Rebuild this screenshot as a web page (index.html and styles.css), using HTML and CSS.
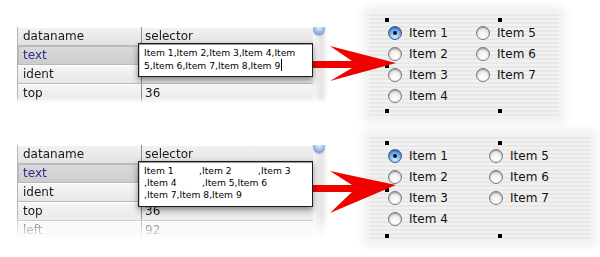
FILE: index.html
```html
<!doctype html>
<html>
<head>
<meta charset="utf-8">
<link rel="stylesheet" href="styles.css">
</head>
<body>
<div class="page">

<section class="demo demo-comma">
	<div class="sheet">
		<div class="grid">
			<div class="row head"><span class="key">dataname</span><span class="val">selector</span></div>
			<div class="row picked"><span class="key">text</span><span class="val"></span></div>
			<div class="row"><span class="key">ident</span><span class="val"></span></div>
			<div class="row"><span class="key">top</span><span class="val">36</span></div>
		</div>
		<div class="strip"><span class="knob"></span></div>
	</div>

	<div class="radios">
		<div class="selection">
			<i class="handle tl"></i><i class="handle tr"></i><i class="handle ml"></i><i class="handle bl"></i><i class="handle br"></i>
			<div class="items">
				<label class="item"><span class="dot on"></span>Item 1</label>
				<label class="item"><span class="dot"></span>Item 2</label>
				<label class="item"><span class="dot"></span>Item 3</label>
				<label class="item"><span class="dot"></span>Item 4</label>
				<label class="item"><span class="dot"></span>Item 5</label>
				<label class="item"><span class="dot"></span>Item 6</label>
				<label class="item"><span class="dot"></span>Item 7</label>
			</div>
		</div>
	</div>

	<svg class="arrow" width="100" height="45" viewBox="0 0 100 45">
		<polygon points="3,21 52,21 30,6 96,23 30,41 52,28 3,28" fill="#f20000"/>
	</svg>

	<div class="editor">Item 1,Item 2,Item 3,Item 4,Item<br>5,Item 6,Item 7,Item 8,Item 9<span class="caret"></span></div>
</section>

<section class="demo demo-tabs">
	<div class="sheet">
		<div class="grid">
			<div class="row head"><span class="key">dataname</span><span class="val">selector</span></div>
			<div class="row picked"><span class="key">text</span><span class="val"></span></div>
			<div class="row"><span class="key">ident</span><span class="val"></span></div>
			<div class="row"><span class="key">top</span><span class="val">36</span></div>
			<div class="row"><span class="key">left</span><span class="val">92</span></div>
		</div>
		<div class="strip"><span class="knob"></span></div>
	</div>

	<div class="radios">
		<div class="selection">
			<i class="handle tl"></i><i class="handle tr"></i><i class="handle ml"></i><i class="handle bl"></i><i class="handle br"></i>
			<div class="items">
				<label class="item"><span class="dot on"></span>Item 1</label>
				<label class="item"><span class="dot"></span>Item 2</label>
				<label class="item"><span class="dot"></span>Item 3</label>
				<label class="item"><span class="dot"></span>Item 4</label>
				<label class="item"><span class="dot"></span>Item 5</label>
				<label class="item"><span class="dot"></span>Item 6</label>
				<label class="item"><span class="dot"></span>Item 7</label>
			</div>
		</div>
	</div>

	<svg class="arrow" width="100" height="50" viewBox="0 0 100 50">
		<polygon points="3,17 52,17 30,3 96,17 30,45 52,24 3,24" fill="#f20000"/>
	</svg>

	<div class="editor">
		<span class="tab t1">Item 1</span><span class="tab t2">,Item 2</span>,Item 3<br>
		<span class="tab t3">,Item 4</span>,Item 5,Item 6<br>
		,Item 7,Item 8,Item 9
	</div>
</section>

</div>
</body>
</html>
```

FILE: styles.css
```css
body {
	margin: 0;
	background: #fff;
	font-family: "DejaVu Sans", "Noto Sans", sans-serif;
	color: #1a1a1a;
	overflow: hidden;
}
.page {
	width: 600px;
	height: 257px;
	display: flex;
	flex-direction: column;
}
.demo {
	position: relative;
	height: 118px;
	display: flex;
	align-items: flex-start;
	padding-left: 17px;
}
.demo-tabs {
	height: 139px;
}

/* property sheet */
.sheet {
	display: flex;
	margin-top: 27px;
	box-shadow: 0 -2px 4px rgba(0, 0, 0, 0.12);
	-webkit-mask-image: linear-gradient(to bottom, #000 calc(100% - 6px), transparent);
	mask-image: linear-gradient(to bottom, #000 calc(100% - 6px), transparent);
}
.demo-tabs .sheet {
	-webkit-mask-image: linear-gradient(to bottom, #000 calc(100% - 26px), rgba(0,0,0,0.35) calc(100% - 12px), transparent);
	mask-image: linear-gradient(to bottom, #000 calc(100% - 26px), rgba(0,0,0,0.35) calc(100% - 12px), transparent);
}
.grid {
	display: flex;
	flex-direction: column;
	border-left: 1px solid #b4b4b4;
}
.row {
	display: flex;
	height: 18px;
	border-bottom: 1px solid #b9b9b9;
	font-size: 12px;
	line-height: 18px;
}
.key, .val {
	background: linear-gradient(#f7f7f7, #e6e6e6);
	box-shadow: inset 0 1px 0 #fff;
}
.key {
	width: 118px;
	padding-left: 5px;
	border-right: 1px solid #8c8c8c;
}
.val {
	width: 168px;
	padding-left: 3px;
}
.head .key, .head .val {
	background: linear-gradient(#f2f2f2, #e2e2e2);
}
.picked .key {
	background: linear-gradient(#dadada, #cdcdcd);
	color: #2e2e8e;
	box-shadow: inset 1px 1px 0 #bbb;
}
.strip {
	position: relative;
	width: 15px;
	background: linear-gradient(to right, #f6f6f6, #e4e4e4 60%, #fff);
}
.knob {
	position: absolute;
	left: 0;
	top: -4px;
	width: 12px;
	height: 12px;
	border-radius: 50%;
	background: radial-gradient(circle at 50% 35%, #eef4ff, #8fb0e6 60%, #5c7fc4);
	box-shadow: 0 1px 1px rgba(0, 0, 0, 0.25);
}

/* radio group canvas */
.radios {
	margin-left: 41px;
	margin-top: 12px;
	width: 172px;
	height: 98px;
	padding: 8px 0 0 18px;
	background: repeating-linear-gradient(to bottom, #f1f1f1 0 2px, #e8e8e8 2px 4px);
	box-shadow: 0 0 10px 5px #eeeeee;
}
.demo-tabs .radios {
	margin-top: 17px;
	width: 204px;
}
.selection {
	position: relative;
	width: 113px;
	height: 91px;
}
.demo-tabs .selection {
	height: 93px;
}
.handle {
	position: absolute;
	width: 4px;
	height: 4px;
	background: #000;
}
.tl { left: -2px; top: -2px; }
.tr { right: -2px; top: -2px; }
.ml { left: -2px; top: calc(50% - 2px); }
.bl { left: -2px; bottom: -2px; }
.br { right: -2px; bottom: -2px; }
.items {
	display: grid;
	grid-auto-flow: column;
	grid-template-rows: repeat(4, 21px);
	grid-template-columns: 88px auto;
	padding: 2px 0 0 1px;
}
.demo-tabs .items {
	grid-template-columns: 101px auto;
}
.item {
	display: flex;
	align-items: center;
	font-size: 12px;
	color: #111;
	white-space: nowrap;
}
.dot {
	position: relative;
	width: 12px;
	height: 12px;
	margin-right: 7px;
	border: 1px solid #777;
	border-radius: 50%;
	background: radial-gradient(circle at 50% 75%, #ffffff, #f2f2f2 45%, #c9c9c9);
	box-shadow: inset 0 1px 1px rgba(0, 0, 0, 0.3);
}
.dot.on {
	border-color: #3b5a95;
	background: radial-gradient(circle at 50% 80%, #d6ecff, #7fb6ef 45%, #2f6fc9);
}
.dot.on::after {
	content: "";
	position: absolute;
	left: 4px;
	top: 4px;
	width: 4px;
	height: 4px;
	border-radius: 50%;
	background: #111;
}

/* arrow and popup editor lie over the other parts */
.arrow {
	position: absolute;
	left: 300px;
	top: 40px;
}
.demo-tabs .arrow {
	top: 50px;
}
.editor {
	position: absolute;
	left: 138px;
	top: 43px;
	width: 175px;
	height: 34px;
	box-sizing: border-box;
	padding: 3px 0 0 5px;
	background: #fff;
	border: 1px solid #1e1e1e;
	box-shadow: inset 0 1px 0 #9a9a9a, inset 1px 0 0 #d0d0d0, 0 3px 6px rgba(0, 0, 0, 0.45);
	font-size: 9.2px;
	line-height: 12px;
	color: #000;
	white-space: nowrap;
}
.demo-tabs .editor {
	height: 46px;
}
.caret {
	display: inline-block;
	width: 1px;
	height: 12px;
	margin-left: 1px;
	vertical-align: -2px;
	background: #000;
}
.tab {
	display: inline-block;
}
.t1 { width: 55px; }
.t2 { width: 59px; }
.t3 { width: 58px; }
```
